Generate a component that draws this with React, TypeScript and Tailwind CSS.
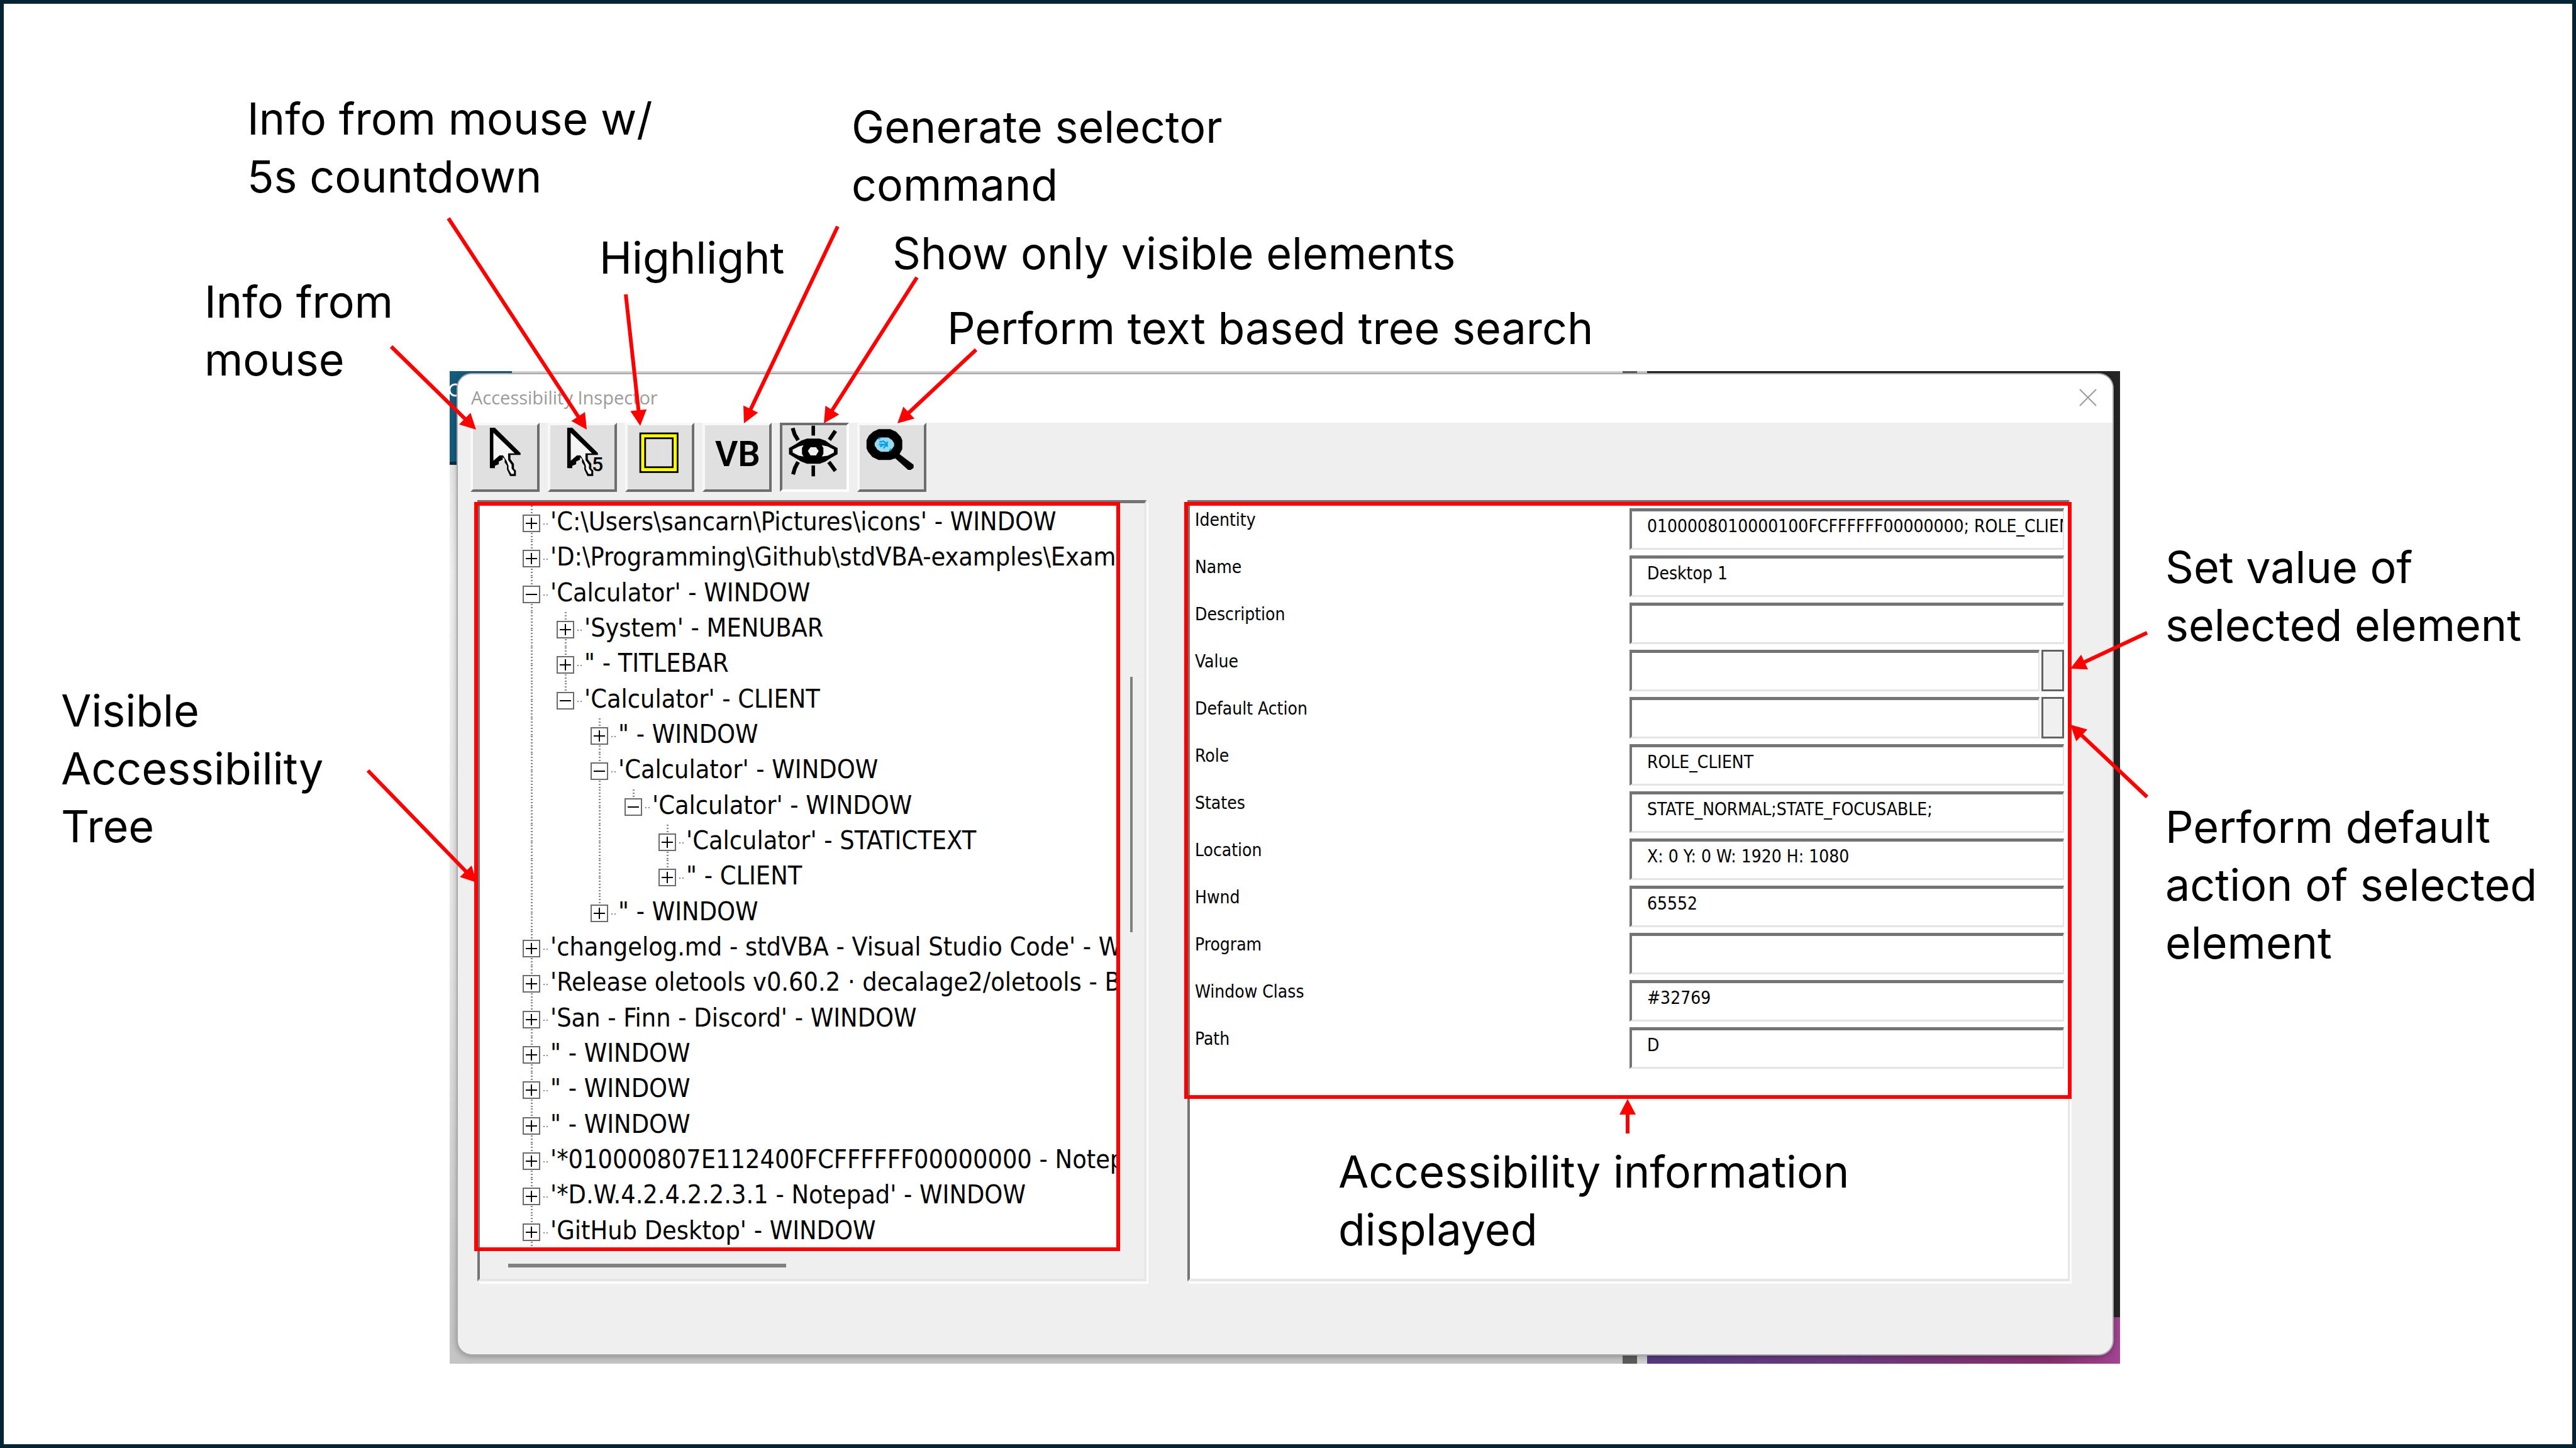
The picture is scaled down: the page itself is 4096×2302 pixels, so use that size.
import React from 'react';

type Node = { level: number; open?: boolean; text: string; guides: string };

// guides: one letter per level cell. "|" passes through, "t" ends at the box, " " is empty.
const NODES: Node[] = [
  { level: 0, guides: '|', text: "'C:\\Users\\sancarn\\Pictures\\icons' - WINDOW" },
  { level: 0, guides: '|', text: "'D:\\Programming\\Github\\stdVBA-examples\\Exam" },
  { level: 0, guides: '|', open: true, text: "'Calculator' - WINDOW" },
  { level: 1, guides: '||', text: "'System' - MENUBAR" },
  { level: 1, guides: '||', text: '" - TITLEBAR' },
  { level: 1, guides: '|t', open: true, text: "'Calculator' - CLIENT" },
  { level: 2, guides: '| |', text: '" - WINDOW' },
  { level: 2, guides: '| |', open: true, text: "'Calculator' - WINDOW" },
  { level: 3, guides: '| |t', open: true, text: "'Calculator' - WINDOW" },
  { level: 4, guides: '| | |', text: "'Calculator' - STATICTEXT" },
  { level: 4, guides: '| | t', text: '" - CLIENT' },
  { level: 2, guides: '| t', text: '" - WINDOW' },
  { level: 0, guides: '|', text: "'changelog.md - stdVBA - Visual Studio Code' - W" },
  { level: 0, guides: '|', text: "'Release oletools v0.60.2 · decalage2/oletools - Br" },
  { level: 0, guides: '|', text: "'San - Finn - Discord' - WINDOW" },
  { level: 0, guides: '|', text: '" - WINDOW' },
  { level: 0, guides: '|', text: '" - WINDOW' },
  { level: 0, guides: '|', text: '" - WINDOW' },
  { level: 0, guides: '|', text: "'*010000807E112400FCFFFFFF00000000 - Notep" },
  { level: 0, guides: '|', text: "'*D.W.4.2.4.2.2.3.1 - Notepad' - WINDOW" },
  { level: 0, guides: '|', text: "'GitHub Desktop' - WINDOW" },
];

const FIELDS: { label: string; value: string; action?: string }[] = [
  { label: 'Identity', value: '0100008010000100FCFFFFFF00000000; ROLE_CLIENT' },
  { label: 'Name', value: 'Desktop 1' },
  { label: 'Description', value: '' },
  { label: 'Value', value: '', action: 'Set value' },
  { label: 'Default Action', value: '', action: 'Perform default action' },
  { label: 'Role', value: 'ROLE_CLIENT' },
  { label: 'States', value: 'STATE_NORMAL;STATE_FOCUSABLE;' },
  { label: 'Location', value: 'X: 0 Y: 0 W: 1920 H: 1080' },
  { label: 'Hwnd', value: '65552' },
  { label: 'Program', value: '' },
  { label: 'Window Class', value: '#32769' },
  { label: 'Path', value: 'D' },
];

// Start and tip of every callout arrow.
const ARROWS = [
  [622, 551, 757, 683],
  [713, 347, 933, 683],
  [995, 468, 1018, 677],
  [1332, 360, 1183, 673],
  [1458, 441, 1310, 673],
  [1552, 556, 1427, 673],
  [585, 1225, 758, 1403],
  [3414, 1006, 3292, 1063],
  [3414, 1267, 3292, 1152],
  [2588, 1802, 2588, 1747],
];

const NOTES = [
  { at: 'left-[393px] top-[143px]', lines: ['Info from mouse w/', '5s countdown'] },
  { at: 'left-[325px] top-[434px]', lines: ['Info from', 'mouse'] },
  { at: 'left-[953px] top-[364px]', lines: ['Highlight'] },
  { at: 'left-[1354px] top-[156px]', lines: ['Generate selector', 'command'] },
  { at: 'left-[1419px] top-[357px]', lines: ['Show only visible elements'] },
  { at: 'left-[1506px] top-[476px]', lines: ['Perform text based tree search'] },
  { at: 'left-[97px] top-[1084px]', lines: ['Visible', 'Accessibility', 'Tree'] },
  { at: 'left-[3443px] top-[856px]', lines: ['Set value of', 'selected element'] },
  { at: 'left-[3443px] top-[1269px]', lines: ['Perform default', 'action of selected', 'element'] },
  { at: 'left-[2128px] top-[1817px]', lines: ['Accessibility information', 'displayed'] },
];

function Arrow({ p }: { p: number[] }) {
  const [x1, y1, x2, y2] = p;
  const len = Math.hypot(x2 - x1, y2 - y1);
  const ux = (x2 - x1) / len;
  const uy = (y2 - y1) / len;
  const bx = x2 - ux * 25;
  const by = y2 - uy * 25;
  return (
    <g>
      <line x1={x1} y1={y1} x2={bx + ux * 3} y2={by + uy * 3} stroke="#ff0000" strokeWidth="6" />
      <polygon
        fill="#ff0000"
        points={`${x2},${y2} ${bx - uy * 13},${by + ux * 13} ${bx + uy * 13},${by - ux * 13}`}
      />
    </g>
  );
}

function Cursor() {
  return (
    <g>
      <path d="M112 44 L230 156 L192 160 L194 190 L212 212 L228 268 L206 268 L188 228 L172 198 L160 172 L124 212 Z" fill="#f4f4f4" />
      <path d="M100 26 H126 L258 156 V166 H206 V188 L224 212 V236 L234 246 V274 H204 L188 240 V222 L176 204 V186 L166 178 V190 L146 200 V214 L126 222 V234 H100 Z M118 52 V196 L150 168 H168 L186 196 L196 222 V238 L210 264 H224 V250 L212 236 V216 L194 192 V158 H228 Z" fill="#000" fillRule="evenodd" />
    </g>
  );
}

const svgBox = { viewBox: '0 0 356 356', className: 'absolute inset-0 size-full', 'aria-hidden': true } as const;

function ToolButton({ label, pressed, children }: { label: string; pressed?: boolean; children: React.ReactNode }) {
  return (
    <button
      type="button"
      aria-label={label}
      aria-pressed={pressed}
      className={
        pressed
          ? 'relative size-[110px] bg-[#e0e0e0] border-4 border-t-[#6d6d6d] border-l-[#6d6d6d] border-r-white border-b-white'
          : 'relative size-[110px] bg-[#e0e0e0] border-4 border-t-[#f8f8f8] border-l-[#f8f8f8] border-r-[#6d6d6d] border-b-[#6d6d6d]'
      }
    >
      <span className="absolute -inset-1">{children}</span>
    </button>
  );
}

function Toolbar() {
  return (
    <div role="toolbar" className="flex gap-[13px] pl-5">
      <ToolButton label="Info from mouse">
        <svg {...svgBox}><Cursor /></svg>
      </ToolButton>
      <ToolButton label="Info from mouse with countdown">
        <svg {...svgBox}><Cursor /></svg>
        <span className="absolute left-[70px] top-[50px] font-['Roboto',sans-serif] text-[32px] leading-8 font-medium">5</span>
      </ToolButton>
      <ToolButton label="Highlight">
        <svg {...svgBox}>
          <rect x="78" y="55" width="192" height="199" fill="#ff0" stroke="#000" strokeWidth="9" />
          <rect x="103" y="80" width="142" height="149" fill="#e0e0e0" stroke="#000" strokeWidth="9" />
        </svg>
      </ToolButton>
      <ToolButton label="Generate selector command">
        <span className="absolute left-5 top-[20px] font-['Roboto',sans-serif] text-[56px] leading-[60px] font-semibold">VB</span>
      </ToolButton>
      <ToolButton label="Show only visible elements" pressed>
        <svg {...svgBox}>
          <path d="M47 130 L80 112 L110 92 L140 82 H205 L235 92 L262 112 L297 130 V162 L262 182 L235 200 L205 211 H140 L110 200 L80 182 L47 162 Z" fill="#000" />
          <path d="M66 138 L98 122 L122 116 L114 130 V160 L122 174 L98 170 L66 154 Z" fill="#f0f0f0" />
          <path d="M278 138 L246 122 L216 116 L224 130 V160 L216 174 L246 170 L278 154 Z" fill="#f0f0f0" />
          <path d="M158 126 H186 L200 146 L186 168 H158 L144 146 Z" fill="#f0f0f0" />
          <g stroke="#000" strokeWidth="18" strokeLinecap="butt">
            <path d="M172 15 V66 M172 220 V276" />
            <path d="M66 28 L76 60 L94 90 M286 42 L255 88 M94 202 L78 232 L68 266 M252 202 L286 248" fill="none" strokeWidth="20" />
          </g>
        </svg>
      </ToolButton>
      <ToolButton label="Perform text based tree search">
        <svg {...svgBox}>
          <path d="M110 33 H170 L200 46 L224 72 L232 90 V135 L218 162 L290 216 V232 L276 243 H262 L196 184 L170 192 H110 L78 176 L56 150 L48 132 V90 L60 66 L82 46 Z" fill="#000" />
          <path d="M118 76 H160 L180 90 L190 106 V120 L176 140 L160 150 H122 L104 138 L90 118 V104 L102 86 Z" fill="#99d9ea" />
          <path d="M114 98 H130 M118 124 L136 112 M130 92 L150 106 L158 98 M136 132 L146 116 L158 122 M112 112 H158 M108 84 L120 78 M166 144 L176 134" stroke="#00a2f0" strokeWidth="8" fill="none" />
        </svg>
      </ToolButton>
    </div>
  );
}

const dots = 'w-[3px] bg-[repeating-linear-gradient(to_bottom,#8a8a8a_0_2px,transparent_2px_5px)]';

function TreeRow({ node }: { node: Node }) {
  return (
    <li role="treeitem" aria-expanded={!!node.open} className="flex min-h-0 flex-1 items-stretch">
      {node.guides.split('').map((g, i) => (
        <span key={i} className="relative flex w-[54px] shrink-0 flex-col items-center">
          <span className={g === ' ' ? 'flex-1' : 'flex-1 ' + dots} />
          <span className={g === '|' ? 'flex-1 ' + dots : 'flex-1'} />
          {i === node.level && (
            <button
              type="button"
              aria-label={node.open ? 'Collapse' : 'Expand'}
              className="absolute top-1/2 left-1/2 flex size-7 -translate-x-1/2 -translate-y-1/2 items-center justify-center bg-white border-2 border-[#6b6b6b]"
            >
              <svg viewBox="0 0 20 20" className="size-5" aria-hidden>
                <path d={node.open ? 'M1 10 H19' : 'M1 10 H19 M10 1 V19'} stroke="#000" strokeWidth="2" />
              </svg>
            </button>
          )}
          {i === node.level && (
            <span className="absolute top-1/2 left-[46px] h-[2px] w-2 bg-[repeating-linear-gradient(to_right,#8a8a8a_0_2px,transparent_2px_5px)]" />
          )}
        </span>
      ))}
      <span className="self-center pb-[6px] pl-[3px] text-[41px] leading-[50px] whitespace-pre">{node.text}</span>
    </li>
  );
}

const sunken = 'border-t-[5px] border-l-4 border-r-[3px] border-b-4 border-t-[#747474] border-l-[#747474] border-r-[#e6e6e6] border-b-[#e6e6e6]';

function TreePanel() {
  return (
    <div className={'grid min-h-0 min-w-0 grid-cols-[minmax(0,1fr)_42px] grid-rows-[minmax(0,1fr)_42px] shadow-[3px_4px_0_#fcfcfc] ' + sunken}>
      <ul role="tree" className="flex min-h-0 flex-col overflow-hidden bg-white pt-1 pr-1 pb-1 pl-[55px]">
        {NODES.map((n, i) => (
          <TreeRow key={i} node={n} />
        ))}
      </ul>
      <div className="flex justify-center pt-[276px]">
        <div className="h-[406px] w-1 bg-[#808080]" />
      </div>
      <div className="flex items-center pl-[45px]">
        <div className="h-[6px] w-[442px] bg-[#808080]" />
      </div>
    </div>
  );
}

function InfoPanel() {
  return (
    <form className={'flex min-w-0 flex-col gap-[9px] bg-white pt-2 pr-[6px] pl-2 shadow-[3px_4px_0_#fcfcfc] ' + sunken}>
      {FIELDS.map((f, i) => (
        <div key={f.label} className="grid h-[66px] grid-cols-2">
          <label htmlFor={'field-' + i} className="pt-[3px] text-[28px] leading-8">
            {f.label}
          </label>
          <div className="flex min-w-0 gap-[3px]">
            <input
              id={'field-' + i}
              type="text"
              defaultValue={f.value}
              className="min-w-0 flex-1 border-t-[5px] border-l-4 border-r-2 border-b-[3px] border-t-[#747474] border-l-[#747474] border-r-[#e4e4e4] border-b-[#e4e4e4] pb-[10px] pl-6 text-[28px] leading-8"
            />
            {f.action && <button type="button" aria-label={f.action} className="w-9 border-[3px] border-[#636363] bg-[#f0f0f0]" />}
          </div>
        </div>
      ))}
    </form>
  );
}

function InspectorWindow() {
  return (
    <section className="relative flex flex-1 flex-col overflow-hidden rounded-[22px] bg-[#efefef] shadow-[0_0_0_2px_#a9a9a9,0_2px_12px_#0006]">
      <header className="flex h-[77px] shrink-0 items-center justify-between bg-white pr-[25px] pb-1 pl-[21px]">
        <h1 className="font-['Open_Sans',sans-serif] text-[29px] leading-9 text-[#9b9b9b]">Accessibility Inspector</h1>
        <button type="button" aria-label="Close" className="size-7">
          <svg viewBox="0 0 28 28" className="size-7" aria-hidden>
            <path d="M1 1 L27 27 M27 1 L1 27" stroke="#9a9a9a" strokeWidth="2" />
          </svg>
        </button>
      </header>
      <Toolbar />
      <div className="mt-[13px] mr-[68px] mb-[116px] ml-[31px] grid min-h-0 flex-1 grid-cols-[1064fr_1403fr] gap-[65px]">
        <TreePanel />
        <InfoPanel />
      </div>
    </section>
  );
}

function Backdrop() {
  return (
    <div className="absolute inset-0 flex" aria-hidden>
      <div className="relative flex min-w-0 flex-1 flex-col bg-[linear-gradient(to_bottom,#dedede,#f0f0f0_20%,#e4e4e4_60%,#c4c4c4)]">
        <div className="h-[149px] w-[99px] border-b-[5px] border-[#062c40] bg-[#155b7e]">
          <svg viewBox="0 0 14 60" className="h-[60px] w-[14px]">
            <path d="M13 22 A9 9 0 1 0 13 38" fill="none" stroke="#fff" strokeWidth="3" />
          </svg>
        </div>
      </div>
      <div className="w-[23px] bg-[#5c5c5c]" />
      <div className="w-4 bg-[#cfcfcf]" />
      <div className="flex w-[752px] flex-col bg-[#252525]">
        <div className="mt-auto h-[74px] bg-[linear-gradient(to_right,#553a80,#6b3a80_40%,#86306c_85%,#a14493)]" />
      </div>
    </div>
  );
}

export default function App() {
  return (
    <main className="relative flex h-screen w-full overflow-hidden bg-white pt-[590px] pr-[725px] pb-[134px] pl-[715px] font-['DejaVu_Sans_Condensed','Noto_Sans',sans-serif] text-black">
      <div className="relative flex min-w-0 flex-1 overflow-hidden pt-[5px] pr-3 pb-[15px] pl-[13px]">
        <Backdrop />
        <InspectorWindow />
      </div>

      {NOTES.map((n) => (
        <p key={n.lines[0]} className={"absolute font-['Inter',sans-serif] text-[70px] leading-[92px] whitespace-nowrap " + n.at}>
          {n.lines.map((l) => (
            <span key={l} className="block">{l}</span>
          ))}
        </p>
      ))}

      <svg viewBox="0 0 4096 2302" className="pointer-events-none absolute inset-0 size-full" aria-hidden>
        <g fill="none" stroke="#ff0000" strokeWidth="6">
          <rect x="757" y="801" width="1021" height="1185" />
          <rect x="1886" y="801" width="1405" height="943" />
        </g>
        {ARROWS.map((a, i) => (
          <Arrow key={i} p={a} />
        ))}
      </svg>
      <div className="pointer-events-none absolute inset-0 border-[6px] border-[#042433]" />
    </main>
  );
}
